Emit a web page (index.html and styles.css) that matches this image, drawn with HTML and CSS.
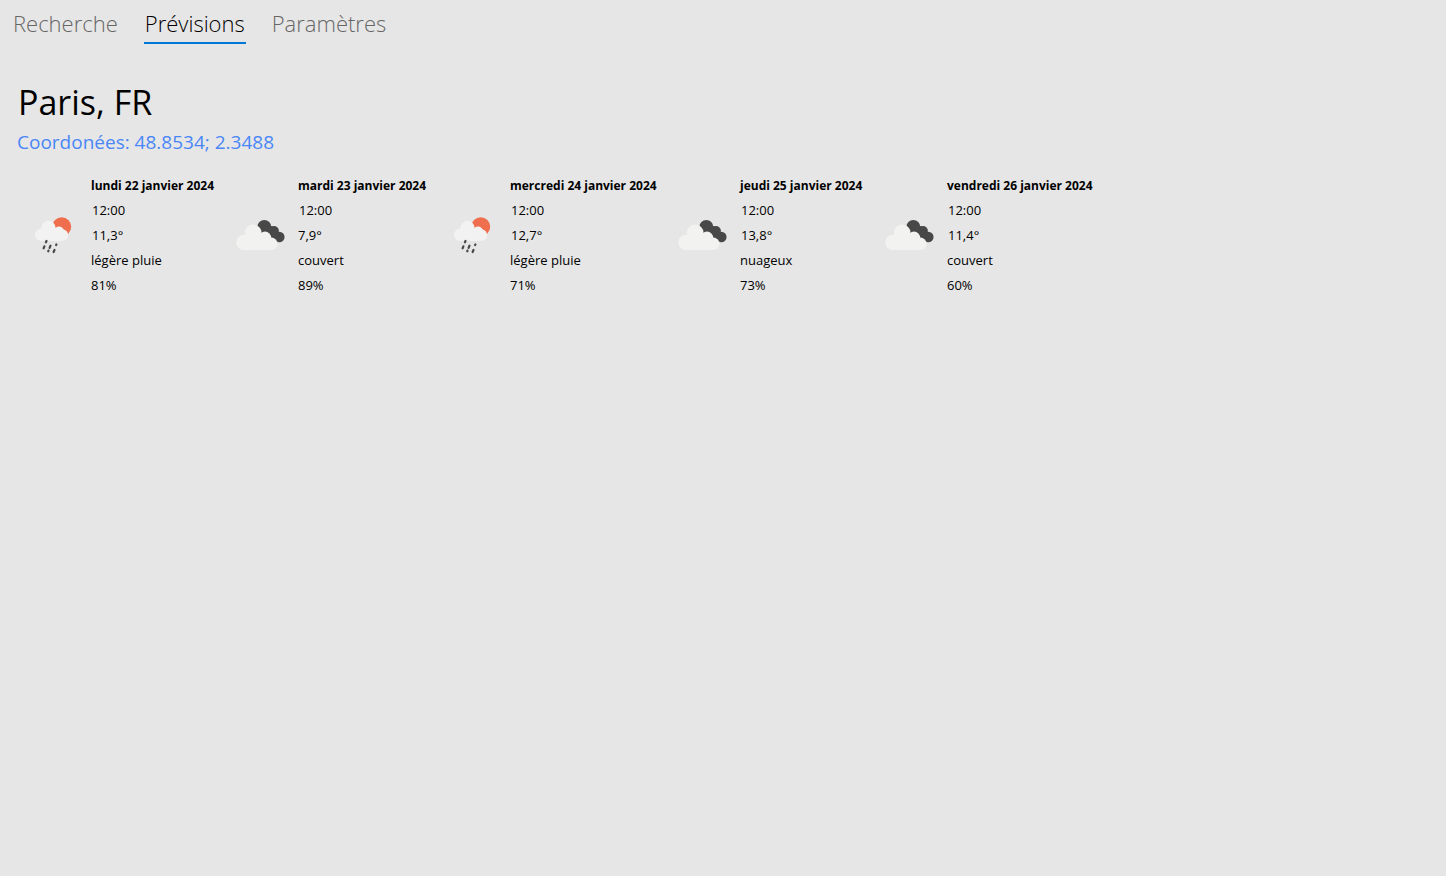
FILE: index.html
```
<!DOCTYPE html>
<html lang="fr">
<head>
<meta charset="utf-8">
<title>Prévisions</title>
<link rel="stylesheet" href="styles.css">
</head>
<body>
<svg class="sprites" aria-hidden="true">
  <symbol id="rain" viewBox="0 1 50 50">
    <circle cx="33.7" cy="16.8" r="9.5" fill="#ee6e4e"/>
    <g fill="#f2f2f2">
      <circle cx="20.500" cy="18" r="7.200"/>
      <circle cx="13.200" cy="24.800" r="6.200"/>
      <circle cx="31" cy="21.500" r="5"/>
      <circle cx="34.300" cy="25.200" r="5.900"/>
      <path d="M13 18h12l6 4h3v9.100H13z"/>
    </g>
    <path d="M18.500 31l-.6 1.300M16.400 36.300l-.8 2M22.500 35.700l-.9 2.200M28.400 34.400l-.3.700M20.500 40.600l-.3.700M26.500 40l-.9 2" stroke="#484848" stroke-width="2.200" stroke-linecap="round" fill="none"/>
  </symbol>
  <symbol id="cloud" viewBox="-1 1 50 50">
    <g fill="#484848">
      <circle cx="28.300" cy="16.900" r="7"/>
      <circle cx="38" cy="21" r="4.900"/>
      <circle cx="43.300" cy="27" r="5.300"/>
      <path d="M27 17l9-1 8 10-1 6-8-1z"/>
    </g>
    <g fill="#f2f2f0">
      <circle cx="17.200" cy="23" r="8.400"/>
      <circle cx="7.800" cy="32.400" r="7.600"/>
      <circle cx="29" cy="27.800" r="6.200"/>
      <circle cx="35.400" cy="33.800" r="6.200"/>
      <path d="M7.800 26l21-2 7 8v8h-28z"/>
    </g>
  </symbol>
</svg>
<nav class="tabs">
  <a class="tab" href="#recherche">Recherche</a>
  <a class="tab active" href="#previsions" aria-current="page">Prévisions</a>
  <a class="tab" href="#parametres">Paramètres</a>
</nav>
<main class="page">
  <h1 class="city">Paris, FR</h1>
  <p class="coords">Coordonées: 48.8534; 2.3488</p>
  <div class="days">
    <article class="day">
      <svg class="icon" aria-hidden="true"><use href="#rain"/></svg>
      <div class="info"><h2 class="date">lundi 22 janvier 2024</h2><p class="inset">12:00</p><p class="inset">11,3°</p><p>légère pluie</p><p>81%</p></div>
    </article>
    <article class="day">
      <svg class="icon" aria-hidden="true"><use href="#cloud"/></svg>
      <div class="info"><h2 class="date">mardi 23 janvier 2024</h2><p class="inset">12:00</p><p>7,9°</p><p>couvert</p><p>89%</p></div>
    </article>
    <article class="day">
      <svg class="icon" aria-hidden="true"><use href="#rain"/></svg>
      <div class="info"><h2 class="date">mercredi 24 janvier 2024</h2><p class="inset">12:00</p><p class="inset">12,7°</p><p>légère pluie</p><p>71%</p></div>
    </article>
    <article class="day">
      <svg class="icon" aria-hidden="true"><use href="#cloud"/></svg>
      <div class="info"><h2 class="date">jeudi 25 janvier 2024</h2><p class="inset">12:00</p><p class="inset">13,8°</p><p>nuageux</p><p>73%</p></div>
    </article>
    <article class="day">
      <svg class="icon" aria-hidden="true"><use href="#cloud"/></svg>
      <div class="info"><h2 class="date">vendredi 26 janvier 2024</h2><p class="inset">12:00</p><p class="inset">11,4°</p><p>couvert</p><p>60%</p></div>
    </article>
  </div>
</main>
</body>
</html>
```
FILE: styles.css
```
* { box-sizing: border-box; }
body {
  margin: 0;
  background: #e6e6e6;
  color: #000;
  font-family: "Segoe UI", "Open Sans", "Noto Sans", sans-serif;
}
h1, h2, p { margin: 0; font-weight: 400; }
.sprites { position: absolute; width: 0; height: 0; }
.tabs { display: flex; gap: 25px; padding: 0 12px; }
.tab {
  height: 44px;
  padding: 0 1px;
  line-height: 46px;
  font-size: 22px;
  font-weight: 300;
  color: #666;
  text-decoration: none;
  border-bottom: 2px solid transparent;
}
.active { color: #000; border-bottom-color: #0078d7; }
.page { padding: 34px 17px; }
.city { padding-left: 1px; font-size: 34px; line-height: 48px; }
.coords { font-size: 19px; line-height: 32px; color: #4a86f7; }
.days {
  display: grid;
  grid-template-columns: 207px 212px 230px 207px 230px;
  padding: 15px 11px;
}
.day { display: flex; align-items: center; gap: 13px; }
.icon { width: 50px; height: 50px; flex: none; }
.info { font-size: 13px; line-height: 25px; white-space: nowrap; }
.date { font-size: 12px; line-height: 25px; font-weight: 700; }
.inset { padding-left: 1px; }
```
